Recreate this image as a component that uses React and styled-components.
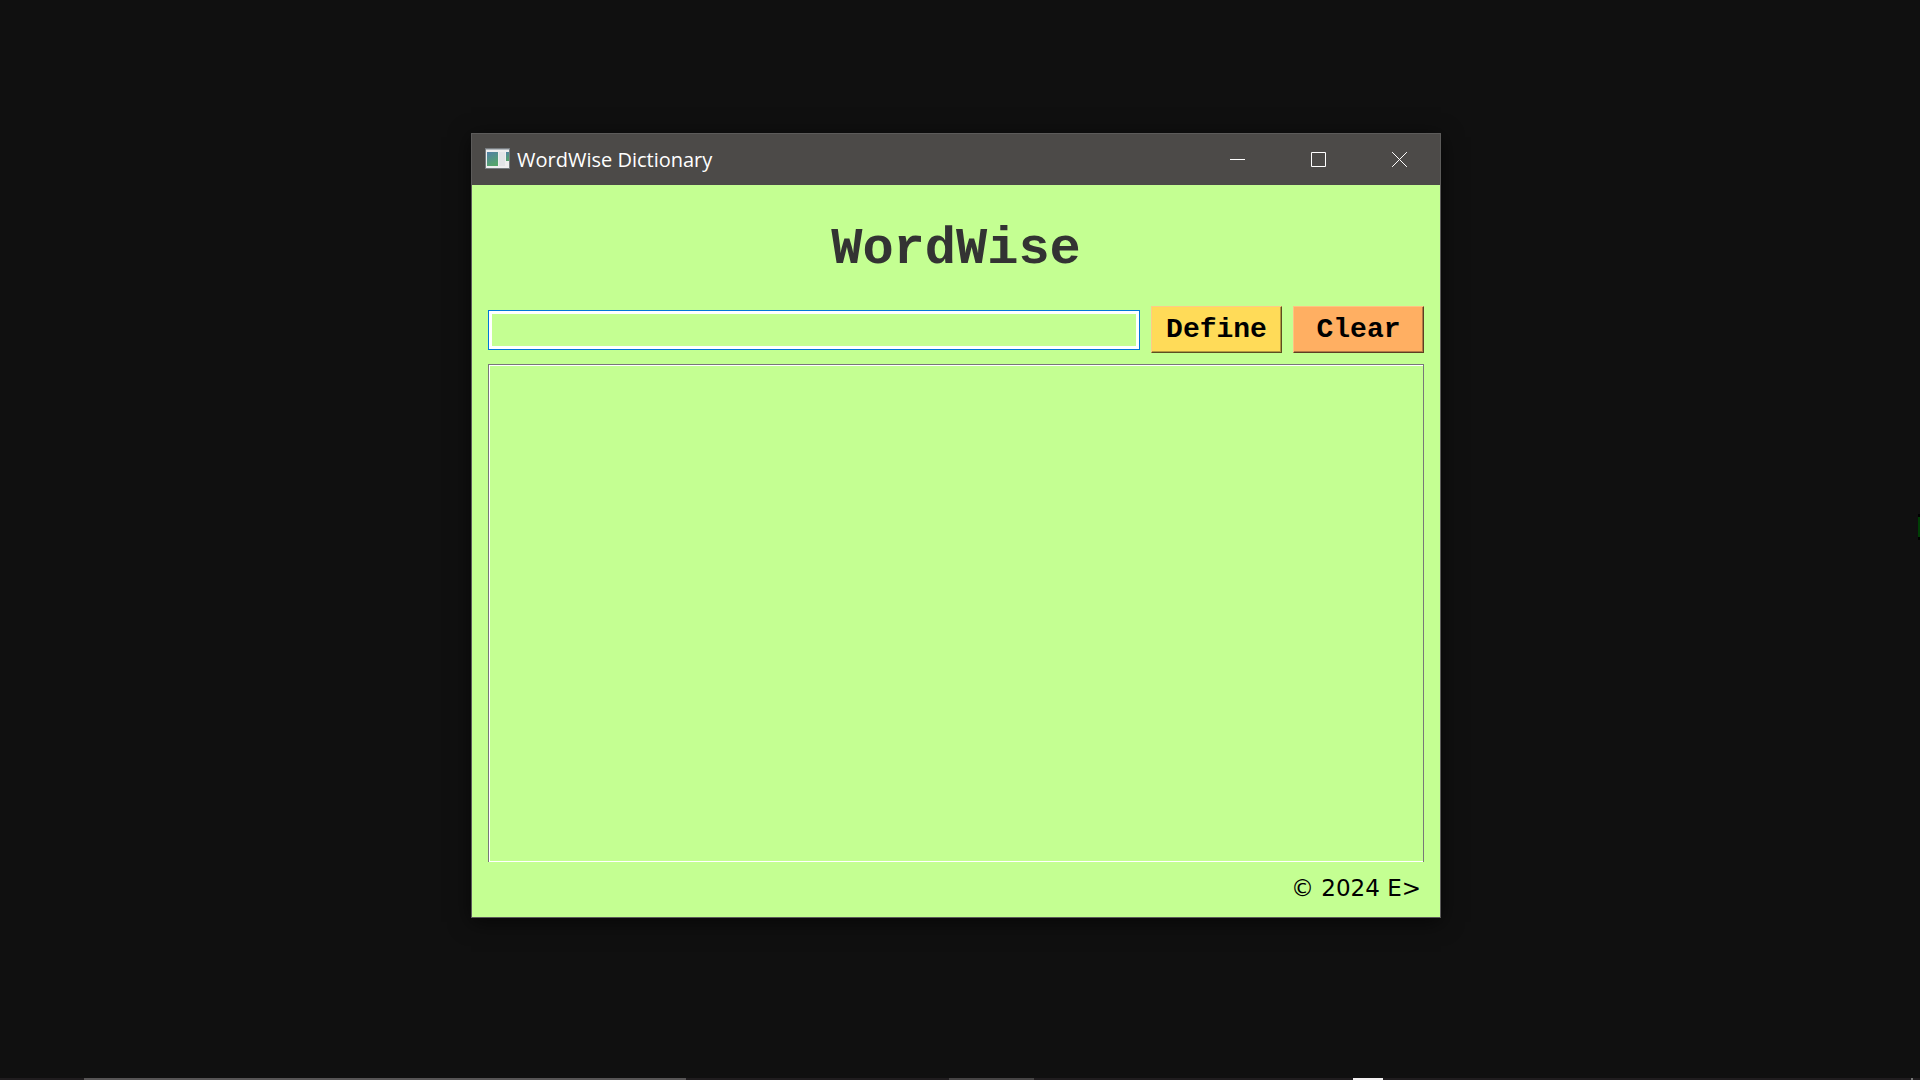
import React from "react";
import styled, { createGlobalStyle } from "styled-components";

const GlobalStyle = createGlobalStyle`
  * { box-sizing: border-box; }
  body { margin: 0; background: #101010; }
`;

const Desktop = styled.div`
  display: flex;
  flex-direction: column;
  align-items: center;
  min-height: 100vh;
  padding: 133px 8px 0 0;
  background: #101010;
`;

const Window = styled.main`
  display: flex;
  flex-direction: column;
  width: 970px;
  max-width: 100%;
  border: 1px solid #5c5b5a;
  background: #c4ff92;
  box-shadow: 0 4px 20px rgba(0, 0, 0, 0.6);
`;

const TitleBar = styled.header`
  display: flex;
  align-items: center;
  height: 51px;
  padding-left: 13px;
  gap: 7px;
  background: #4c4a48;
  color: #ffffff;
`;

const Title = styled.span`
  flex: 1;
  font: 20px/28px "Open Sans", "Noto Sans", sans-serif;
`;

const CaptionButtons = styled.div`
  display: flex;
`;

const CaptionButton = styled.button`
  display: flex;
  align-items: center;
  justify-content: center;
  width: 81px;
  height: 51px;
  padding: 0;
  border: 0;
  background: transparent;
  color: #ffffff;
`;

const Content = styled.div`
  padding: 35px 16px 14px;
`;

const Heading = styled.h1`
  margin: 0 0 26px;
  color: #333333;
  font: bold 52px/60px "Liberation Mono", "Courier New", monospace;
  text-align: center;
`;

const SearchRow = styled.form`
  display: flex;
  align-items: center;
  gap: 11px;
  margin-bottom: 11px;
`;

const WordInput = styled.input`
  flex: 1;
  min-width: 0;
  height: 40px;
  padding: 0 4px;
  border: 1px solid #0078d7;
  border-radius: 0;
  outline: 0;
  background: #c4ff92;
  box-shadow: inset 0 0 0 3px #ffffff;
  font: 24px "Liberation Mono", monospace;
  caret-color: transparent;
`;

const ActionButton = styled.button`
  width: 131px;
  height: 47px;
  padding: 0;
  border: solid;
  border-width: 1px;
  border-color: ${(p) => p.$light} ${(p) => p.$dark} ${(p) => p.$dark} ${(p) => p.$light};
  box-shadow: inset -1px -1px ${(p) => p.$shade};
  background: ${(p) => p.$color};
  color: #000000;
  font: bold 28px/32px "Liberation Mono", "Courier New", monospace;
`;

const Definition = styled.textarea`
  display: block;
  width: 100%;
  height: 498px;
  padding: 4px;
  border: solid #787878;
  border-width: 1px 1px 0;
  border-radius: 0;
  outline: 0;
  resize: none;
  background: #c4ff92;
  box-shadow: inset 1px 1px #ffffff, inset 0 -1px #ffffff;
  font: 24px "Liberation Mono", monospace;
`;

const Footer = styled.footer`
  margin-top: 11px;
  padding-right: 3px;
  color: #000000;
  font: 23px/30px Verdana, "DejaVu Sans", sans-serif;
  text-align: right;
`;

const Taskbar = styled.div`
  position: fixed;
  inset: auto 0 0;
  display: flex;
  height: 2px;
  background: #201d1f;
`;

const TaskbarPart = styled.span`
  flex: ${(p) => p.$size} 0 0;
  background: ${(p) => p.$color || "transparent"};
`;

const EdgeMark = styled.span`
  position: fixed;
  top: 517px;
  right: 0;
  width: 2px;
  height: 20px;
  background: #003f05;
  box-shadow: 0 -3px #000000, 0 3px #000000;
`;

const taskbarParts = [
  [84], [602, "#575556"], [263], [85, "#464445"], [319], [30, "#f2f0f1"], [528], [2, "#777777"], [7],
];

function AppIcon() {
  return (
    <svg width="25" height="24" viewBox="0 0 25 24" aria-hidden="true">
      <defs>
        <linearGradient id="screen" x1="0" y1="0" x2="0.4" y2="1">
          <stop offset="0" stopColor="#527fa8" />
          <stop offset="1" stopColor="#55a46c" />
        </linearGradient>
      </defs>
      <rect x="0" y="0" width="25" height="21" fill="#777c80" />
      <rect x="1" y="1" width="23" height="19" fill="#eeeeef" />
      <rect x="1" y="1" width="23" height="1" fill="#b4b9bd" />
      <rect x="2" y="4" width="11" height="14" fill="url(#screen)" />
      <rect x="14" y="4" width="6" height="14" fill="#e2e4e7" />
      <rect x="21" y="4" width="3" height="9" fill="url(#screen)" />
    </svg>
  );
}

function CaptionIcon({ d }) {
  return (
    <svg width="15" height="15" viewBox="0 0 15 15" fill="none" stroke="currentColor" aria-hidden="true">
      <path d={d} />
    </svg>
  );
}

export default function App() {
  return (
    <Desktop>
      <GlobalStyle />
      <Window>
        <TitleBar>
          <AppIcon />
          <Title>WordWise Dictionary</Title>
          <CaptionButtons>
            <CaptionButton aria-label="Minimize"><CaptionIcon d="M0 7.5h15" /></CaptionButton>
            <CaptionButton aria-label="Maximize"><CaptionIcon d="M.5.5h14v14H.5z" /></CaptionButton>
            <CaptionButton aria-label="Close"><CaptionIcon d="M.1.1l14.8 14.8M14.9.1L.1 14.9" /></CaptionButton>
          </CaptionButtons>
        </TitleBar>
        <Content>
          <Heading>WordWise</Heading>
          <SearchRow onSubmit={(e) => e.preventDefault()}>
            <WordInput type="text" aria-label="Word" />
            <ActionButton type="submit" $color="#ffdb58" $light="#ffcb86" $shade="#b39a3e" $dark="#5e4d20">Define</ActionButton>
            <ActionButton type="reset" $color="#ffaf62" $light="#ffc382" $shade="#b37a45" $dark="#5e3d22">Clear</ActionButton>
          </SearchRow>
          <Definition aria-label="Definition" readOnly />
          <Footer>© 2024 E&gt;</Footer>
        </Content>
      </Window>
      <EdgeMark />
      <Taskbar>
        {taskbarParts.map(([size, color], i) => (
          <TaskbarPart key={i} $size={size} $color={color} />
        ))}
      </Taskbar>
    </Desktop>
  );
}
